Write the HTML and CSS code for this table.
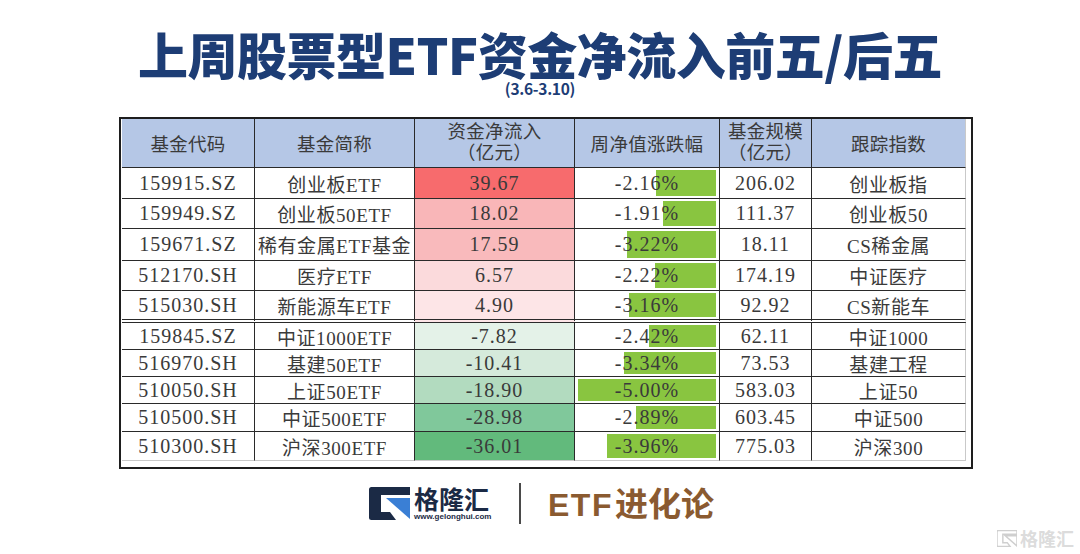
FILE: index.html
```html
<!DOCTYPE html>
<html lang="zh-CN">
<head>
<meta charset="utf-8">
<title>上周股票型ETF资金净流入前五/后五</title>
<link rel="stylesheet" href="styles.css">
</head>
<body>
<div class="page">
  <h1 class="title">上周股票型ETF资金净流入前五/后五</h1>
  <div class="subtitle">(3.6-3.10)</div>

  <div class="frame">
    <div class="grid">
      <div class="cell head">基金代码</div>
      <div class="cell head">基金简称</div>
      <div class="cell head two">资金净流入<br>（亿元）</div>
      <div class="cell head">周净值涨跌幅</div>
      <div class="cell head two">基金规模<br>（亿元）</div>
      <div class="cell head c6">跟踪指数</div>

      <div class="cell">159915.SZ</div>
      <div class="cell">创业板ETF</div>
      <div class="cell flow" style="background:#f76b6d">39.67</div>
      <div class="cell chg"><span class="bar" style="width:59.6px"></span><span class="num">-2.16%</span></div>
      <div class="cell">206.02</div>
      <div class="cell c6">创业板指</div>

      <div class="cell">159949.SZ</div>
      <div class="cell">创业板50ETF</div>
      <div class="cell flow" style="background:#f9b6b8">18.02</div>
      <div class="cell chg"><span class="bar" style="width:52.7px"></span><span class="num">-1.91%</span></div>
      <div class="cell">111.37</div>
      <div class="cell c6">创业板50</div>

      <div class="cell">159671.SZ</div>
      <div class="cell">稀有金属ETF基金</div>
      <div class="cell flow" style="background:#f9babc">17.59</div>
      <div class="cell chg"><span class="bar" style="width:88.9px"></span><span class="num">-3.22%</span></div>
      <div class="cell">18.11</div>
      <div class="cell c6">CS稀金属</div>

      <div class="cell">512170.SH</div>
      <div class="cell">医疗ETF</div>
      <div class="cell flow" style="background:#fbdadc">6.57</div>
      <div class="cell chg"><span class="bar" style="width:61.3px"></span><span class="num">-2.22%</span></div>
      <div class="cell">174.19</div>
      <div class="cell c6">中证医疗</div>

      <div class="cell sep">515030.SH</div>
      <div class="cell sep">新能源车ETF</div>
      <div class="cell sep flow" style="background:#fde5e7">4.90</div>
      <div class="cell sep chg"><span class="bar" style="width:87.2px"></span><span class="num">-3.16%</span></div>
      <div class="cell sep">92.92</div>
      <div class="cell sep c6">CS新能车</div>

      <div class="cell">159845.SZ</div>
      <div class="cell">中证1000ETF</div>
      <div class="cell flow" style="background:#e4f2e8">-7.82</div>
      <div class="cell chg"><span class="bar" style="width:66.8px"></span><span class="num">-2.42%</span></div>
      <div class="cell">62.11</div>
      <div class="cell c6">中证1000</div>

      <div class="cell">516970.SH</div>
      <div class="cell">基建50ETF</div>
      <div class="cell flow" style="background:#d5eadb">-10.41</div>
      <div class="cell chg"><span class="bar" style="width:92.2px"></span><span class="num">-3.34%</span></div>
      <div class="cell">73.53</div>
      <div class="cell c6">基建工程</div>

      <div class="cell">510050.SH</div>
      <div class="cell">上证50ETF</div>
      <div class="cell flow" style="background:#b2dbbf">-18.90</div>
      <div class="cell chg"><span class="bar" style="width:138px"></span><span class="num">-5.00%</span></div>
      <div class="cell">583.03</div>
      <div class="cell c6">上证50</div>

      <div class="cell">510500.SH</div>
      <div class="cell">中证500ETF</div>
      <div class="cell flow" style="background:#80c89b">-28.98</div>
      <div class="cell chg"><span class="bar" style="width:79.8px"></span><span class="num">-2.89%</span></div>
      <div class="cell">603.45</div>
      <div class="cell c6">中证500</div>

      <div class="cell last">510300.SH</div>
      <div class="cell last">沪深300ETF</div>
      <div class="cell last flow" style="background:#62ba7c">-36.01</div>
      <div class="cell last chg"><span class="bar" style="width:109.3px"></span><span class="num">-3.96%</span></div>
      <div class="cell last">775.03</div>
      <div class="cell last c6">沪深300</div>
    </div>
  </div>

  <div class="footer">
    <svg class="glogo" width="41" height="33" viewBox="0 0 41 33">
      <path d="M2.5 0 H41 V8 H12 V25 H21 L27 33 H2.5 Q0 33 0 30.5 V2.5 Q0 0 2.5 0 Z" fill="#1b2a45"/>
      <path d="M17 11 H41 V32 Z" fill="#3a7fd5"/>
    </svg>
    <div class="brand">
      <div class="brand-name">格隆汇</div>
      <div class="brand-url">www.gelonghui.com</div>
    </div>
    <div class="divider"></div>
    <div class="column-name"><span class="etf">ETF</span>进化论</div>
  </div>

  <div class="watermark">
    <svg width="20" height="17" viewBox="0 0 41 33">
      <path d="M2.5 0 H41 V8 H12 V25 H21 L27 33 H2.5 Q0 33 0 30.5 V2.5 Q0 0 2.5 0 Z" fill="none" stroke="#cfcfcf" stroke-width="3"/>
      <path d="M17 11 H41 V32 Z" fill="none" stroke="#cfcfcf" stroke-width="3"/>
    </svg>
    <span>格隆汇</span>
  </div>
</div>
</body>
</html>
```

FILE: styles.css
```css
html, body {
  margin: 0;
  padding: 0;
  background: #ffffff;
}

.page {
  position: relative;
  width: 1080px;
  height: 554px;
  overflow: hidden;
  background: #ffffff;
}

.title {
  margin: 0;
  padding-top: 26px;
  font-family: "Noto Sans CJK SC", "Noto Sans", sans-serif;
  font-weight: 900;
  font-size: 50px;
  line-height: 54px;
  color: #1d3d75;
  text-align: center;
  letter-spacing: -0.5px;
}

.subtitle {
  margin-top: 0;
  font-family: "Noto Sans CJK SC", "Noto Sans", sans-serif;
  font-weight: 700;
  font-size: 15.5px;
  line-height: 17px;
  color: #1d3d75;
  text-align: center;
  letter-spacing: -0.3px;
}

.frame {
  margin-top: 20px;
  margin-left: 119px;
  width: 847px;
  border: 2px solid #1e1e1e;
  padding: 0 2px 6px 1px;
}

.grid {
  display: grid;
  grid-template-columns: 133px 160px 160px 145px 92px 154px;
  grid-template-rows: 49px 31px 30px 32px 30px 32px 27px 27px 27px 28px 29px;
  font-family: "Liberation Serif", "Noto Sans CJK SC", serif;
  font-size: 19px;
  color: #3a3a3a;
  letter-spacing: 0.6px;
}

.cell {
  box-sizing: border-box;
  display: flex;
  align-items: center;
  justify-content: center;
  text-align: center;
  border-right: 1px solid #2a2a2a;
  border-bottom: 1px solid #2a2a2a;
  white-space: nowrap;
}

.cell:not(.head):nth-child(6n+1),
.cell:not(.head):nth-child(6n+3),
.cell:not(.head):nth-child(6n+4),
.cell:not(.head):nth-child(6n+5) {
  font-size: 20px;
  letter-spacing: 1px;
}

.cell.c6 {
  border-right-color: #c9c9c9;
}

.head {
  background: #b5c7e6;
  font-size: 18.5px;
  letter-spacing: 0.3px;
}

.head.two {
  line-height: 21px;
  padding-bottom: 1px;
}

.cell.sep {
  border-bottom: 4px double #2a2a2a;
}

.cell.last {
  border-bottom-color: #c9c9c9;
}

.cell.chg {
  display: grid;
  grid-template-columns: 1fr;
  grid-template-rows: 1fr;
  justify-content: stretch;
  align-items: stretch;
}

.chg .bar {
  grid-area: 1 / 1;
  justify-self: end;
  margin: 2px 3px 2px 0;
  background: #89c540;
}

.chg .num {
  grid-area: 1 / 1;
  justify-self: center;
  align-self: center;
  position: relative;
}

.footer {
  margin-top: 9px;
  height: 50px;
  display: flex;
  align-items: center;
  padding-left: 369px;
}

.glogo {
  display: block;
  flex: none;
}

.brand {
  margin-left: 4px;
  display: flex;
  flex-direction: column;
  align-items: flex-start;
}

.brand-name {
  font-family: "Noto Sans CJK SC", sans-serif;
  font-weight: 700;
  font-size: 25px;
  line-height: 26px;
  color: #1b2a45;
  letter-spacing: 0;
}

.brand-url {
  font-family: "Liberation Sans", Arial, sans-serif;
  font-weight: 700;
  font-size: 8px;
  line-height: 9px;
  color: #1b2a45;
  margin-top: 1px;
}

.divider {
  margin-left: 28px;
  width: 1.5px;
  height: 41px;
  background: #4a4a4a;
}

.column-name {
  margin-left: 27px;
  font-family: "Noto Sans CJK SC", sans-serif;
  font-weight: 700;
  font-size: 33px;
  line-height: 40px;
  color: #8a5a30;
}

.column-name .etf {
  font-family: "Liberation Sans", Arial, sans-serif;
  font-weight: 700;
  font-size: 32px;
  letter-spacing: 1.5px;
  margin-right: 2px;
}

.watermark {
  position: absolute;
  right: 6px;
  bottom: 6px;
  display: flex;
  align-items: center;
  gap: 3px;
  font-family: "Noto Sans CJK SC", sans-serif;
  font-weight: 700;
  font-size: 18px;
  line-height: 20px;
  color: rgba(215, 215, 215, 0.9);
}
```
